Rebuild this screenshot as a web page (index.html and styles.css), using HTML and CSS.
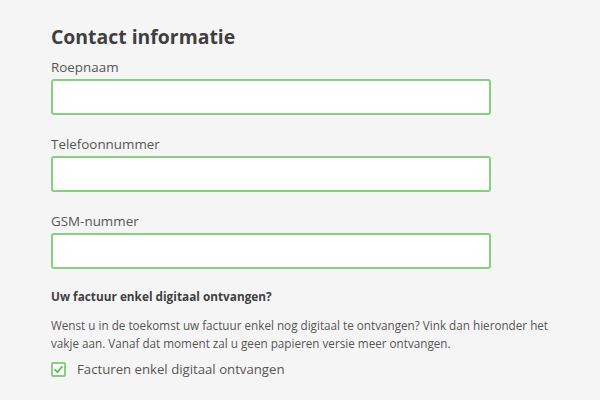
FILE: index.html
```html
<!DOCTYPE html>
<html lang="nl">
<head>
<meta charset="utf-8">
<title>Contact informatie</title>
<link rel="stylesheet" href="styles.css">
</head>
<body>
<main class="form">
  <h2 class="title">Contact informatie</h2>
  <div class="field">
    <label class="label" for="roepnaam">Roepnaam</label>
    <input class="input" id="roepnaam" type="text">
  </div>
  <div class="field">
    <label class="label" for="tel">Telefoonnummer</label>
    <input class="input" id="tel" type="text">
  </div>
  <div class="field">
    <label class="label" for="gsm">GSM-nummer</label>
    <input class="input" id="gsm" type="text">
  </div>
  <h3 class="subtitle">Uw factuur enkel digitaal ontvangen?</h3>
  <p class="text">Wenst u in de toekomst uw factuur enkel nog digitaal te ontvangen? Vink dan hieronder het vakje aan. Vanaf dat moment zal u geen papieren versie meer ontvangen.</p>
  <label class="check">
    <span class="box">
      <svg width="11" height="11" viewBox="0 0 11 11"><path d="M2 5.8 L4.4 8.2 L9 2.8" fill="none" stroke="#4bb543" stroke-width="1.6" stroke-linecap="round" stroke-linejoin="round"/></svg>
    </span>
    <span class="check-label">Facturen enkel digitaal ontvangen</span>
  </label>
</main>
</body>
</html>
```

FILE: styles.css
```css
html, body {
  margin: 0;
  padding: 0;
  background: #f5f5f5;
}
body {
  font-family: "Open Sans", "Noto Sans", sans-serif;
  color: #555;
}
.form {
  padding: 23px 0 0 51px;
  width: 510px;
  display: flex;
  flex-direction: column;
}
.title {
  margin: 0 0 6px;
  font-size: 19.4px;
  line-height: 28px;
  font-weight: 700;
  color: #3f3f3f;
}
.field {
  display: flex;
  flex-direction: column;
  margin-bottom: 19px;
}
.label {
  font-size: 13.4px;
  line-height: 20px;
  color: #555;
  margin-bottom: 2px;
}
.input {
  width: 440px;
  height: 36px;
  box-sizing: border-box;
  border: 2px solid #86d07f;
  border-radius: 3px;
  background: #fff;
  margin: 0;
  padding: 0 8px;
}
.subtitle {
  margin: 0;
  font-size: 11.8px;
  line-height: 16px;
  font-weight: 700;
  color: #3f3f3f;
}
.text {
  margin: 13px 0 0;
  font-size: 11.7px;
  line-height: 17.5px;
  color: #555;
}
.check {
  display: flex;
  align-items: center;
  gap: 11px;
  margin-top: 7px;
}
.box {
  width: 15px;
  height: 15px;
  box-sizing: border-box;
  border: 2px solid #86d07f;
  border-radius: 2px;
  background: #fff;
  display: flex;
  align-items: center;
  justify-content: center;
}
.check-label {
  font-size: 13.2px;
  line-height: 20px;
  color: #555;
}
```
